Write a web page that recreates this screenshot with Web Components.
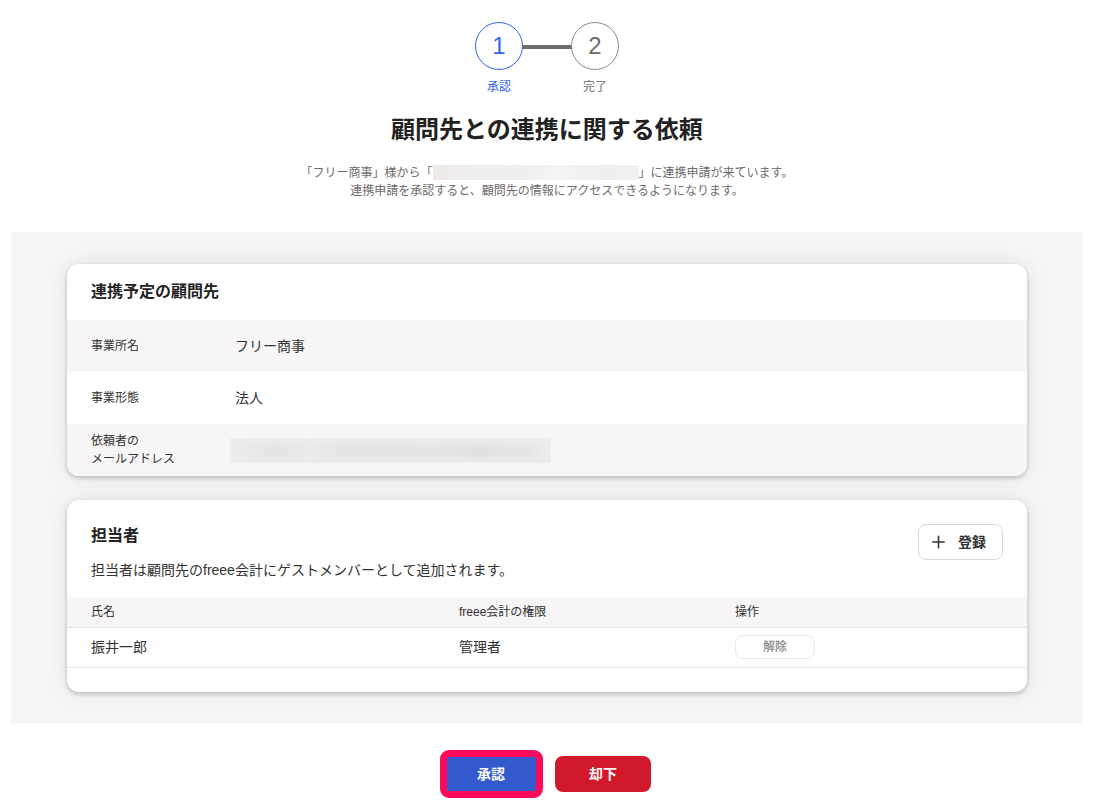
<!DOCTYPE html>
<html lang="ja">
<head>
<meta charset="utf-8">
<meta name="viewport" content="width=device-width, initial-scale=1">
<title>顧問先との連携に関する依頼</title>
<style>
  body {
    margin: 0;
    background: #fff;
    color: #323232;
    font: 14px/20px "Liberation Sans", "Noto Sans CJK JP", sans-serif;
    --primary: #3264f0;
    --ink: #222;
    --muted: #6e6b6b;
    --surface: #f7f5f6;
  }
</style>
</head>
<body>
<link-request-page>
  <step-list slot="steps">
    <step-item number="1" current>承認</step-item>
    <step-item number="2">完了</step-item>
  </step-list>
  <page-intro slot="intro">
    <span slot="title">顧問先との連携に関する依頼</span>
    「フリー商事」様から「<masked-text></masked-text>」に連携申請が来ています。<br>連携申請を承認すると、顧問先の情報にアクセスできるようになります。
  </page-intro>
  <client-card></client-card>
  <member-card></member-card>
  <action-button slot="actions" highlighted>承認</action-button>
  <action-button slot="actions" variant="danger">却下</action-button>
</link-request-page>

<script>
const define = (name, html, setup) => {
  const template = document.createElement('template');
  template.innerHTML = html;
  customElements.define(name, class extends HTMLElement {
    constructor() {
      super();
      this.attachShadow({ mode: 'open' }).append(template.content.cloneNode(true));
    }
    connectedCallback() {
      if (setup) setup(this, this.shadowRoot);
    }
  });
};

define('link-request-page', `
  <style>
    :host { display: block; }
    header { padding: 22px 12px 32px; }
    main { margin: 0 12px 0 11px; }
    .panel { background: var(--surface); padding: 32px 56px; display: grid; gap: 24px; }
    .actions { display: flex; justify-content: center; gap: 16px; padding: 32px 0 12px; }
  </style>
  <main>
    <header><slot name="steps"></slot><slot name="intro"></slot></header>
    <div class="panel"><slot></slot></div>
    <div class="actions"><slot name="actions"></slot></div>
  </main>`);

define('step-list', `
  <style>
    :host { display: flex; justify-content: center; gap: 48px; }
  </style>
  <slot></slot>`);

define('step-item', `
  <style>
    :host { display: block; width: 48px; text-align: center; color: var(--muted); font-size: 12px; line-height: 18px; }
    :host([current]) { color: var(--primary); }
    .circle {
      box-sizing: border-box; position: relative;
      display: flex; align-items: center; justify-content: center;
      height: 48px; margin-bottom: 8px; border: 1px solid #8c8989; border-radius: 50%;
      font-size: 24px; line-height: 24px;
    }
    :host([current]) .circle { border-color: var(--primary); }
    :host(:not(:last-of-type)) .circle::after {
      content: ""; position: absolute; left: 100%; top: 22px; width: 50px; height: 4px; background: var(--muted);
    }
  </style>
  <div class="circle"></div>
  <div><slot></slot></div>`,
  (host, root) => { root.querySelector('.circle').textContent = host.getAttribute('number'); });

define('page-intro', `
  <style>
    :host { display: block; text-align: center; }
    h1 { margin: 16px 0; font-size: 24px; line-height: 36px; font-weight: 700; color: var(--ink); }
    p { margin: 0; font-size: 12px; line-height: 18px; color: var(--muted); }
  </style>
  <h1><slot name="title"></slot></h1>
  <p><slot></slot></p>`);

define('masked-text', `
  <style>
    :host {
      display: inline-block; vertical-align: top; width: 206px; height: 15px; margin-top: 1px;
      background: linear-gradient(90deg, #f0e9e8, #efedec 12%, #efefef 45%, #f4f4f4 60%, #eeeeee 85%, #f2f2f2);
    }
    :host([wide]) {
      display: block; width: 321px; height: 25px; margin-top: 0;
      background:
        linear-gradient(180deg, #eeedee, #eeedee00 45% 60%, #eeedee),
        linear-gradient(90deg, #eeedee, #e3e3e3 14%, #ebeaeb 25%, #e4e4e4 35% 55%, #e6e5e6 65%, #e0e0e0 79%, #e6e5e6 86% 93%, #eeedee);
    }
  </style>`);

define('content-card', `
  <style>
    :host {
      display: block; overflow: hidden; background: #fff; border-radius: 12px;
      box-shadow: 0 0 20px rgba(0, 0, 0, .1), 0 2px 4px rgba(0, 0, 0, .2);
    }
  </style>
  <slot></slot>`);

define('client-card', `
  <style>
    :host { display: block; }
    h2 { margin: 0; padding: 16px 24px; font-size: 16px; line-height: 24px; color: var(--ink); }
    dl { margin: 0; }
    .row { display: grid; grid-template-columns: 144px 1fr; align-items: center; height: 52px; padding: 0 24px; }
    .row:nth-child(odd) { background: var(--surface); }
    dt { font-size: 12px; line-height: 18px; }
    dd { margin: 0; }
    masked-text { margin-left: -5px; }
  </style>
  <content-card>
    <h2>連携予定の顧問先</h2>
    <dl>
      <div class="row"><dt>事業所名</dt><dd>フリー商事</dd></div>
      <div class="row"><dt>事業形態</dt><dd>法人</dd></div>
      <div class="row"><dt>依頼者の<br>メールアドレス</dt><dd><masked-text wide></masked-text></dd></div>
    </dl>
  </content-card>`);

define('member-card', `
  <style>
    :host { display: block; }
    .head { display: flex; justify-content: space-between; align-items: flex-start; padding: 24px 24px 16px; }
    h2 { margin: 0 0 12px; font-size: 16px; line-height: 24px; color: var(--ink); }
    p { margin: 0; line-height: 21px; }
    button { box-sizing: border-box; font: inherit; font-weight: 700; color: inherit; background: #fff; border: 1px solid #dcd9d9; border-radius: 8px; }
    .add { display: flex; align-items: center; gap: 12px; height: 36px; padding: 0 16px 0 12px; }
    .add svg { display: block; }
    .remove { display: block; width: 80px; height: 24px; padding: 0; font-size: 12px; line-height: 18px; color: #9a9898; border-color: #ebe8e8; }
    table { width: 100%; margin-bottom: 24px; border-collapse: separate; border-spacing: 0; table-layout: fixed; }
    th, td { box-sizing: border-box; padding: 0 24px; border-bottom: 1px solid #e6e4e4; text-align: left; vertical-align: middle; font-weight: 400; }
    th { height: 31px; background: var(--surface); font-size: 12px; line-height: 18px; }
    td { height: 40px; padding-bottom: 2px; }
    .name { width: 368px; }
    .role { width: 276px; }
  </style>
  <content-card>
    <div class="head">
      <div>
        <h2>担当者</h2>
        <p>担当者は顧問先のfreee会計にゲストメンバーとして追加されます。</p>
      </div>
      <button class="add" type="button">
        <svg width="15" height="14" viewBox="0 0 15 14" fill="none" stroke="#323232" stroke-width="1.6" stroke-linecap="round" aria-hidden="true"><path d="M1.8 7H13.2M7.5 1.3V12.7"/></svg>
        登録
      </button>
    </div>
    <table>
      <thead><tr><th class="name" scope="col">氏名</th><th class="role" scope="col">freee会計の権限</th><th scope="col">操作</th></tr></thead>
      <tbody><tr><td>振井一郎</td><td>管理者</td><td><button class="remove" type="button" disabled>解除</button></td></tr></tbody>
    </table>
  </content-card>`);

define('action-button', `
  <style>
    :host { display: block; position: relative; }
    button {
      display: block; width: 96px; height: 36px; padding: 0; border: 0; border-radius: 8px;
      background: #325acd; color: #fff; font: inherit; font-weight: 700;
    }
    :host([variant="danger"]) button { background: #d2182b; }
    :host([highlighted])::after {
      content: ""; position: absolute; inset: -6px -4px -6px -3px;
      border: 7px solid #ff0a5a; border-radius: 9px; pointer-events: none;
    }
  </style>
  <button type="button"><slot></slot></button>`);
</script>
</body>
</html>
